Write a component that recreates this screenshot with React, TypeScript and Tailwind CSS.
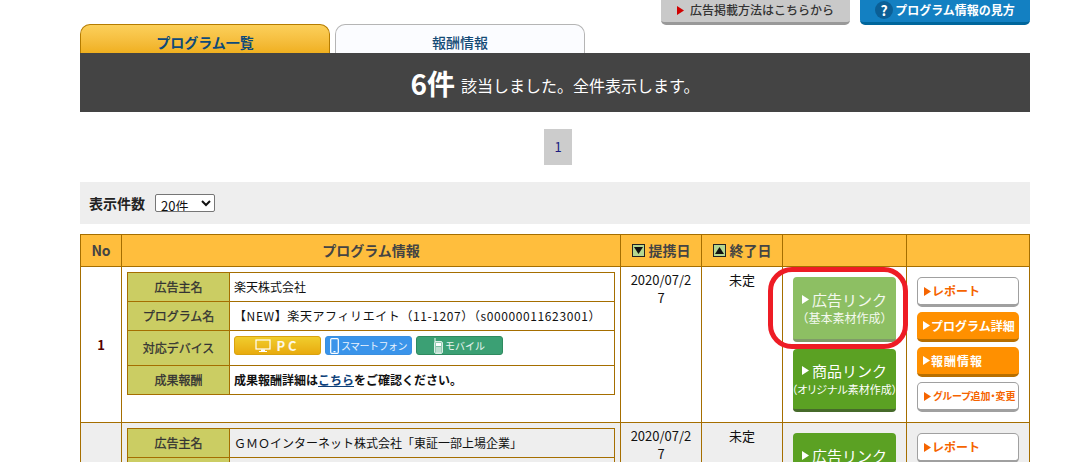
import React from "react";

const jp = "font-['Noto_Sans_CJK_JP','Liberation_Sans',sans-serif]";

function Tri({ className }: { className: string }) {
  return (
    <svg width="7" height="9" viewBox="0 0 7 9" className={"shrink-0 " + className}>
      <path d="M0 0 L7 4.5 L0 9 Z" fill="currentColor" />
    </svg>
  );
}

function SortIcon({ up }: { up?: boolean }) {
  return (
    <svg width="13" height="13" viewBox="0 0 13 13" className="shrink-0">
      <rect x="0.5" y="0.5" width="12" height="12" fill="#b5d78f" stroke="#222" />
      <path d={up ? "M6.5 3 L11 10 L2 10 Z" : "M2 3 L11 3 L6.5 10 Z"} fill="#111" />
    </svg>
  );
}

function LinkButton({ title, sub, light, long }: { title: string; sub: string; light?: boolean; long?: boolean }) {
  return (
    <div
      className={
        "mx-auto flex w-[103px] flex-col items-center justify-center rounded-[4px] border-b-[3px] pb-[3px] text-white " +
        (long ? "h-[63px] " : "h-[65px] ") +
        (light ? "border-[#7f9a68] bg-[#8dbf63] text-white/90" : "border-[#466a2a] bg-[#5ba123]")
      }
    >
      <div className="flex items-center gap-[3px] text-[15px] leading-[22px]">
        <Tri className="text-white" />
        {title}
      </div>
      <div className={"leading-[14px] whitespace-nowrap " + (long ? "text-[11px] [font-feature-settings:'palt']" : "text-[12px]")}>{sub}</div>
    </div>
  );
}

function SideButton({ label, solid, small, spaced }: { label: string; solid?: boolean; small?: boolean; spaced?: boolean }) {
  return (
    <div
      className={
        "flex h-[30px] w-[102px] items-center rounded-[5px] pl-[6px] font-bold leading-none whitespace-nowrap " +
        (small ? "gap-[2px] text-[10px] [font-feature-settings:'palt'] " : "gap-[1px] text-[12px] ") +
        (spaced ? "tracking-[1px] " : "") +
        (solid
          ? "border-b-[3px] border-[#b86f00] bg-[#ff9000] text-white"
          : "border border-b-[3px] border-[#a0a0a0] bg-white text-[#f56400]")
      }
    >
      <Tri className={solid ? "text-white" : "text-[#f56400]"} />
      {label}
    </div>
  );
}

function Badge({ color, icon, label, wide }: { color: string; icon: React.ReactNode; label: string; wide?: boolean }) {
  return (
    <span
      className={
        "flex h-[19px] w-[87px] items-center justify-center gap-[2px] rounded-[3px] border leading-none whitespace-nowrap text-white/90 " +
        color +
        (wide ? " text-[13px] font-bold tracking-[3px]" : " text-[10px]")
      }
    >
      {icon}
      {label}
    </span>
  );
}

function Info({ rows }: { rows: { label: string; h: string; value: React.ReactNode }[] }) {
  return (
    <table className="w-[488px] table-fixed border-collapse">
      <colgroup>
        <col className="w-[102px]" />
        <col />
      </colgroup>
      <tbody>
        {rows.map((r) => (
          <tr key={r.label} className={r.h}>
            <th className="border border-[#a56e00] bg-[#cbcd63] text-center align-middle text-[12px] font-normal text-[#333] [-webkit-text-stroke:0.3px_#333]">
              {r.label}
            </th>
            <td className="border border-[#a56e00] px-[4px] align-middle text-[12px] text-[#111]">{r.value}</td>
          </tr>
        ))}
      </tbody>
    </table>
  );
}

const pc = (
  <svg width="16" height="14" viewBox="0 0 16 14" className="mr-[3px]">
    <rect x="1" y="1" width="14" height="9" fill="none" stroke="#fff" strokeWidth="1.2" />
    <path d="M6 10.5h4v1.5h2v1H4v-1h2z" fill="#fff" />
  </svg>
);
const phone = (
  <svg width="9" height="16" viewBox="0 0 9 16" className="shrink-0">
    <rect x="0.7" y="0.7" width="7.6" height="14.6" rx="1" fill="none" stroke="#fff" strokeWidth="1.2" />
    <rect x="3.5" y="13" width="2" height="1.2" fill="#fff" />
  </svg>
);
const mobile = (
  <svg width="9" height="16" viewBox="0 0 9 16" className="shrink-0">
    <path d="M1 0v4" stroke="#fff" />
    <rect x="0.7" y="3.7" width="7.6" height="11.6" rx="1" fill="#ffffff55" stroke="#fff" />
    <rect x="2" y="5" width="5" height="3" fill="#fff" />
    <path d="M2 10h5M2 12h5M2 14h5" stroke="#fff" />
  </svg>
);

const cell = "border border-[#a56e00]";
const dateCell = cell + " px-[9px] pt-[4px] text-center align-top text-[13px] leading-[18px] break-all text-[#111]";
const endCell = cell + " pt-[4px] text-center align-top text-[13px] leading-[18px] text-[#111]";

export default function App() {
  return (
    <div className={"relative h-[462px] w-[1074px] overflow-hidden bg-white " + jp}>
      <div className="ml-[80px] w-[950px]">
        <div className="flex h-[24px] justify-end gap-[10px]">
          <div className="flex h-[25px] w-[189px] items-center justify-center gap-[6px] rounded-b-[5px] border-b-[3px] border-[#999] bg-[#c9c9c9] pb-[2px] text-[12px] font-medium text-[#333]">
            <Tri className="text-[#d00000]" />
            広告掲載方法はこちらから
          </div>
          <div className="flex h-[25px] w-[170px] items-center justify-center gap-[2px] rounded-b-[5px] border-b-[3px] border-[#00669c] bg-[#1380c2] pb-[2px] text-[12px] font-bold text-white">
            <span className="flex h-[18px] w-[18px] items-center justify-center rounded-full bg-[#0b5f96] text-[14px]">?</span>
            プログラム情報の見方
          </div>
        </div>

        <div className="flex h-[29px] gap-[5px]">
          <div className="h-[29px] w-[250px] rounded-t-[10px] border border-b-0 border-[#b57c00] bg-gradient-to-b from-[#fcd05a] to-[#f0b01e] pt-[8px] text-center text-[14px] leading-[19px] font-bold text-[#0d4a7a]">
            プログラム一覧
          </div>
          <div className="h-[29px] w-[250px] rounded-t-[10px] border border-b-0 border-[#b5b5b5] bg-[#fbfcff] pt-[8px] text-center text-[14px] leading-[19px] font-medium text-[#134a75]">
            報酬情報
          </div>
        </div>

        <div className="flex h-[59px] items-center justify-center gap-[6px] bg-[#444444] text-white">
          <span className="text-[28px] leading-none font-bold">6件</span>
          <span className="pt-[5px] text-[16px] leading-none">該当しました。全件表示します。</span>
        </div>

        <div className="flex h-[70px] items-center justify-center pl-[6px]">
          <span className="flex h-[36px] w-[28px] items-center justify-center bg-[#cccccc] text-[13px] text-[#1a1a80]">1</span>
        </div>

        <div className="flex h-[42px] items-center gap-[10px] bg-[#eeeeee] pl-[9px] text-[14px]">
          <span className="font-bold text-[#222]">表示件数</span>
          <select
            className="h-[18px] w-[60px] rounded-[2px] border border-[#767676] bg-white pl-[1px] text-[13px] leading-[16px] text-[#111]"
            defaultValue="20"
          >
            <option value="20">20件</option>
          </select>
        </div>

        <table className="mt-[10px] w-[950px] table-fixed border-collapse">
          <colgroup>
            <col className="w-[41px]" />
            <col className="w-[499px]" />
            <col className="w-[81px]" />
            <col className="w-[81px]" />
            <col className="w-[124px]" />
            <col />
          </colgroup>
          <thead>
            <tr className="h-[32px] bg-[#ffbe3d] text-[14px] font-bold text-[#444]">
              <th className={cell}>No</th>
              <th className={cell}>プログラム情報</th>
              <th className={cell}>
                <span className="flex items-center justify-center gap-[4px]">
                  <SortIcon />
                  提携日
                </span>
              </th>
              <th className={cell}>
                <span className="flex items-center justify-center gap-[4px]">
                  <SortIcon up />
                  終了日
                </span>
              </th>
              <th className={cell}></th>
              <th className={cell}></th>
            </tr>
          </thead>
          <tbody>
            <tr className="h-[156px]">
              <td className={cell + " text-center align-middle text-[13px] font-bold text-[#500]"}>1</td>
              <td className={cell + " px-[5px] pt-[5px] pb-[27px] align-top"}>
                <Info
                  rows={[
                    { label: "広告主名", h: "h-[29px]", value: "楽天株式会社" },
                    {
                      label: "プログラム名",
                      h: "h-[29px]",
                      value: <span className="tracking-[0.6px] whitespace-nowrap">【NEW】楽天アフィリエイト（11-1207）（s00000011623001）</span>,
                    },
                    {
                      label: "対応デバイス",
                      h: "h-[35px]",
                      value: (
                        <div className="flex gap-[4px] pb-[5px]">
                          <Badge wide color="border-[#d9a20f] bg-gradient-to-b from-[#f0cd2c] to-[#e8ab0c]" icon={pc} label="PC" />
                          <Badge color="border-[#3b8fdf] bg-[#3a94ea] tracking-[-0.5px]" icon={phone} label="スマートフォン" />
                          <Badge color="border-[#2f8a5f] bg-[#3ba074]" icon={mobile} label="モバイル" />
                        </div>
                      ),
                    },
                    {
                      label: "成果報酬",
                      h: "h-[29px]",
                      value: (
                        <span className="font-bold">
                          成果報酬詳細は<span className="text-[#0d3f7a] underline">こちら</span>をご確認ください。
                        </span>
                      ),
                    },
                  ]}
                />
              </td>
              <td className={dateCell}>2020/07/27</td>
              <td className={endCell}>未定</td>
              <td className={cell + " pt-[10px] align-top"}>
                <div className="flex flex-col gap-[7px]">
                  <LinkButton light title="広告リンク" sub="（基本素材作成）" />
                  <LinkButton long title="商品リンク" sub="（オリジナル素材作成）" />
                </div>
              </td>
              <td className={cell + " pt-[10px] align-top"}>
                <div className="flex flex-col items-center gap-[5px]">
                  <SideButton label="レポート" />
                  <SideButton solid label="プログラム詳細" />
                  <SideButton solid spaced label="報酬情報" />
                  <SideButton small label="グループ追加・変更" />
                </div>
              </td>
            </tr>
            <tr className="h-[156px] bg-[#eeeeee]">
              <td className={cell}></td>
              <td className={cell + " px-[5px] pt-[5px] align-top"}>
                <Info
                  rows={[
                    { label: "広告主名", h: "h-[29px]", value: "ＧＭＯインターネット株式会社「東証一部上場企業」" },
                    { label: "プログラム名", h: "h-[29px]", value: "" },
                  ]}
                />
              </td>
              <td className={dateCell}>2020/07/27</td>
              <td className={endCell}>未定</td>
              <td className={cell + " pt-[10px] align-top"}>
                <LinkButton title="広告リンク" sub="（基本素材作成）" />
              </td>
              <td className={cell + " pt-[10px] align-top"}>
                <div className="flex flex-col items-center">
                  <SideButton label="レポート" />
                </div>
              </td>
            </tr>
          </tbody>
        </table>
      </div>

      <div className="pointer-events-none absolute top-[267px] left-[768px] h-[82px] w-[140px] rounded-[24px] border-[5px] border-[#ee1c25]" />
    </div>
  );
}
